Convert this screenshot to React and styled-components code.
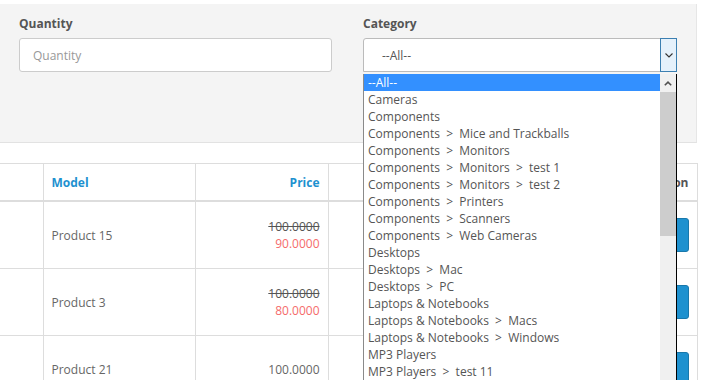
import React from "react";
import styled, { createGlobalStyle } from "styled-components";

const Global = createGlobalStyle`
  html, body { margin: 0; padding: 0; background: #fff; }
  body { font-family: "Open Sans", "DejaVu Sans", sans-serif; font-size: 12px; color: #666; overflow: hidden; }
`;

const Page = styled.div`
  position: relative;
  width: 710px;
  height: 380px;
  overflow: hidden;
  padding-top: 4px;
  box-sizing: border-box;
`;

const FilterPanel = styled.div`
  width: 697px;
  height: 139px;
  box-sizing: border-box;
  background: #f4f4f4;
  border-bottom: 1px solid #e2e2e2;
  border-right: 1px solid #e6e6e6;
  padding: 11px 0 0 19px;
  display: grid;
  grid-template-columns: 313px 314px;
  column-gap: 31px;
  align-content: start;
`;

const Group = styled.div`
  display: flex;
  flex-direction: column;
  gap: 6px;
`;

const Label = styled.label`
  font-weight: 700;
  font-size: 12px;
  line-height: 17px;
  color: #555;
`;

const Input = styled.input`
  height: 34px;
  box-sizing: border-box;
  border: 1px solid #ccc;
  border-radius: 3px;
  padding: 1px 13px 0;
  font-family: inherit;
  font-size: 12px;
  background: #fff;
  outline: none;
  &::placeholder { color: #999; }
`;

const SelectBox = styled.div`
  height: 34px;
  box-sizing: border-box;
  border: 1px solid #bbb;
  border-radius: 3px 0 0 0;
  background: #fff;
  display: flex;
  align-items: stretch;
`;

const SelectValue = styled.div`
  flex: 1;
  padding: 1px 0 0 18px;
  display: flex;
  align-items: center;
  color: #555;
`;

const ArrowButton = styled.div`
  width: 17px;
  box-sizing: border-box;
  margin: -1px -1px -1px 0;
  border: 1px solid #3c7fb1;
  background: #e5f1fb;
  display: flex;
  align-items: center;
  justify-content: center;
`;

const Table = styled.table`
  margin-top: 20px;
  width: 697px;
  border-collapse: collapse;
  table-layout: fixed;
`;

const Th = styled.th`
  height: 36px;
  padding: 0 8px;
  border: 1px solid #ddd;
  border-bottom: 2px solid #ddd;
  font-weight: 700;
  font-size: 12px;
  text-align: ${(p) => (p.$right ? "right" : "left")};
  color: ${(p) => (p.$link ? "#1e91cf" : "#555")};
  &:first-child { border-left: none; }
`;

const Td = styled.td`
  height: 66px;
  padding: 0 8px;
  border: 1px solid #ddd;
  vertical-align: middle;
  text-align: ${(p) => (p.$right ? "right" : "left")};
  color: #666;
  line-height: 17px;
  &:first-child { border-left: none; }
`;

const OldPrice = styled.span`
  display: block;
  text-decoration: line-through;
  color: #555;
`;

const Special = styled.span`
  display: block;
  color: #f56b6b;
`;

const EditButton = styled.span`
  display: inline-block;
  width: 36px;
  height: 34px;
  box-sizing: border-box;
  border-radius: 3px;
  background: #1e91cf;
  border: 1px solid #1978ab;
  vertical-align: middle;
`;

const Dropdown = styled.div`
  position: absolute;
  left: 363px;
  top: 74px;
  width: 314px;
  height: 330px;
  box-sizing: border-box;
  background: #fff;
  border-left: 1px solid #8a8a8a;
  border-right: 1px solid #000;
  display: flex;
`;

const OptionList = styled.ul`
  flex: 1;
  list-style: none;
  margin: 0;
  padding: 0;
`;

const Option = styled.li`
  height: 17px;
  line-height: 17px;
  padding-left: 4px;
  white-space: pre;
  color: ${(p) => (p.$active ? "#fff" : "#555")};
  background: ${(p) => (p.$active ? "#3390ff" : "transparent")};
`;

const Scrollbar = styled.div`
  width: 16px;
  background: #f0f0f0;
  display: flex;
  flex-direction: column;
`;

const ScrollArrow = styled.div`
  height: 18px;
  display: flex;
  align-items: center;
  justify-content: center;
`;

const ScrollThumb = styled.div`
  height: 144px;
  background: #cdcdcd;
`;

const options = [
  "--All--",
  "Cameras",
  "Components",
  "Components  >  Mice and Trackballs",
  "Components  >  Monitors",
  "Components  >  Monitors  >  test 1",
  "Components  >  Monitors  >  test 2",
  "Components  >  Printers",
  "Components  >  Scanners",
  "Components  >  Web Cameras",
  "Desktops",
  "Desktops  >  Mac",
  "Desktops  >  PC",
  "Laptops & Notebooks",
  "Laptops & Notebooks  >  Macs",
  "Laptops & Notebooks  >  Windows",
  "MP3 Players",
  "MP3 Players  >  test 11",
];

const rows = [
  { model: "Product 15", price: "100.0000", special: "90.0000" },
  { model: "Product 3", price: "100.0000", special: "80.0000" },
  { model: "Product 21", price: "100.0000" },
];

export default function App() {
  return (
    <Page>
      <Global />
      <FilterPanel>
        <Group>
          <Label>Quantity</Label>
          <Input placeholder="Quantity" />
        </Group>
        <Group>
          <Label>Category</Label>
          <SelectBox>
            <SelectValue>--All--</SelectValue>
            <ArrowButton>
              <svg width="8" height="5" viewBox="0 0 8 5">
                <path d="M0.5 0.5 L4 4 L7.5 0.5" fill="none" stroke="#333" strokeWidth="1.1" />
              </svg>
            </ArrowButton>
          </SelectBox>
        </Group>
      </FilterPanel>
      <Table>
        <colgroup>
          <col style={{ width: 43 }} />
          <col style={{ width: 152 }} />
          <col style={{ width: 133 }} />
          <col style={{ width: 140 }} />
          <col style={{ width: 120 }} />
          <col style={{ width: 109 }} />
        </colgroup>
        <thead>
          <tr>
            <Th />
            <Th $link>Model</Th>
            <Th $link $right>Price</Th>
            <Th />
            <Th />
            <Th $right>Action</Th>
          </tr>
        </thead>
        <tbody>
          {rows.map((r) => (
            <tr key={r.model}>
              <Td />
              <Td>{r.model}</Td>
              <Td $right>
                {r.special ? (
                  <>
                    <OldPrice>{r.price}</OldPrice>
                    <Special>{r.special}</Special>
                  </>
                ) : (
                  r.price
                )}
              </Td>
              <Td />
              <Td />
              <Td $right>
                <EditButton />
              </Td>
            </tr>
          ))}
        </tbody>
      </Table>
      <Dropdown>
        <OptionList>
          {options.map((o, i) => (
            <Option key={o} $active={i === 0}>
              {o}
            </Option>
          ))}
        </OptionList>
        <Scrollbar>
          <ScrollArrow>
            <svg width="8" height="5" viewBox="0 0 8 5">
              <path d="M0.8 4.3 L4 1.2 L7.2 4.3" fill="none" stroke="#505050" strokeWidth="1.6" />
            </svg>
          </ScrollArrow>
          <ScrollThumb />
        </Scrollbar>
      </Dropdown>
    </Page>
  );
}
